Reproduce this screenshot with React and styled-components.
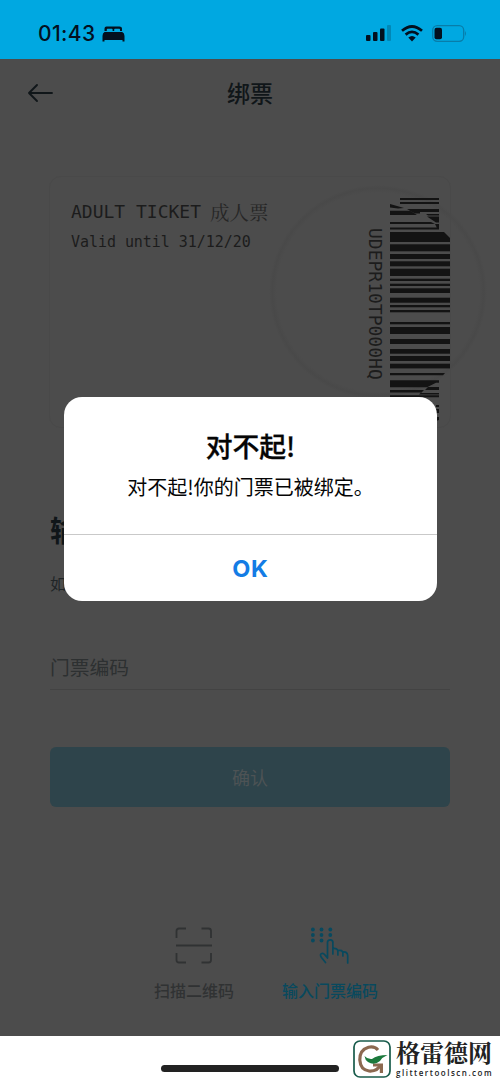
import React from "react";
import styled, { createGlobalStyle } from "styled-components";

const GlobalStyle = createGlobalStyle`
  * {
    box-sizing: border-box;
  }

  body {
    margin: 0;
    background: #fff;
    font-family: "Noto Sans CJK SC", sans-serif;
  }
`;

const Page = styled.div`
  position: relative;
  display: flex;
  flex-direction: column;
  width: 500px;
  height: 1082px;
  overflow: hidden;
`;

const StatusBar = styled.header`
  display: flex;
  justify-content: space-between;
  align-items: center;
  height: 59px;
  padding: 8px 33px 0 38px;
  background: #00a8e1;
  color: #03101f;
`;

const StatusGroup = styled.div`
  display: flex;
  align-items: center;
  gap: ${(props) => props.$gap}px;
`;

const Time = styled.span`
  width: 58px;
  font: 500 21px/24px Inter, sans-serif;
  letter-spacing: 0.4px;
  white-space: nowrap;
`;

const Screen = styled.main`
  display: flex;
  flex-direction: column;
  height: 977px;
  background: radial-gradient(
    ellipse 109px 107px at 378px 233px,
    #4c4c4c 0 93%,
    #494949 97%,
    #4c4c4c 100%
  );
  color: #101619;
`;

const NavBar = styled.nav`
  display: grid;
  grid-template-columns: 54px 1fr 54px;
  align-items: center;
  height: 67px;
  padding: 0 27px;
`;

const NavTitle = styled.h1`
  margin: 0;
  font-size: 23px;
  font-weight: 500;
  line-height: 32px;
  text-align: center;
  transform: translateY(-1px);
`;

const Ticket = styled.section`
  display: flex;
  justify-content: space-between;
  height: 252px;
  margin: 50px 49px 0;
  padding-left: 21px;
  border: 1px solid #494949;
  border-radius: 12px;
  color: #1c1c1c;
`;

const TicketText = styled.div`
  padding-top: 19px;
  font-family: "DejaVu Sans Mono", "Noto Sans CJK SC", monospace;
  white-space: pre;
`;

const TicketName = styled.div`
  display: flex;
  align-items: center;
  gap: 9px;
  height: 31px;
  font-size: 18px;
`;

const TicketKind = styled.span`
  font: 19.5px/30px "Noto Serif CJK SC", "Noto Sans CJK SC", serif;
  color: #262626;
`;

const TicketDate = styled.div`
  font-size: 15px;
  line-height: 30px;
  letter-spacing: -0.05px;
`;

const TicketCode = styled.div`
  display: flex;
  gap: 4px;
  padding-top: 21px;
`;

const CodeText = styled.div`
  width: 22px;
  padding-top: 30px;
  writing-mode: vertical-rl;
  font: 18px/22px "DejaVu Sans Mono", monospace;
`;

const Heading = styled.h2`
  margin: 82px 50px 0;
  font-size: 29px;
  font-weight: 700;
  line-height: 38px;
`;

const Hint = styled.p`
  margin: 23px 50px 0;
  font-size: 16px;
  line-height: 24px;
  color: #202527;
`;

const Field = styled.div`
  height: 46px;
  margin: 49px 50px 0;
  border-bottom: 1px solid #434343;
  font-size: 19.8px;
  line-height: 46px;
  color: #2d3031;
`;

const ConfirmButton = styled.button`
  height: 60px;
  margin: 57px 50px 0;
  padding: 0;
  border: 0;
  border-radius: 6px;
  background: #2e444b;
  color: #4d5355;
  font: 18px/60px "Noto Sans CJK SC", sans-serif;
`;

const Tabs = styled.div`
  display: flex;
  justify-content: center;
  gap: 40px;
  margin-top: 120px;
  padding-left: 32px;
`;

const Tab = styled.div`
  display: flex;
  flex-direction: column;
  align-items: center;
  width: ${(props) => props.$width}px;
  color: ${(props) => (props.$active ? "#08495e" : "#303233")};
`;

const TabLabel = styled.span`
  margin-top: 13px;
  font-size: 16px;
  font-weight: 500;
  line-height: 24px;
  white-space: nowrap;
`;

const Footer = styled.footer`
  display: flex;
  justify-content: space-between;
  height: 46px;
  padding-left: 161px;
  background: #fff;
`;

const HomeIndicator = styled.div`
  width: 178px;
  height: 7px;
  margin-top: 29px;
  border-radius: 4px;
  background: #222;
`;

const Brand = styled.div`
  display: flex;
  gap: 5px;
  width: 149px;
  padding: 4px 0 0 2px;
`;

const BrandText = styled.div`
  display: flex;
  flex-direction: column;
  color: #222;
`;

const BrandName = styled.strong`
  font: 700 24px/24px "Noto Serif CJK SC", "Noto Sans CJK SC", serif;
  white-space: nowrap;
`;

const BrandSite = styled.span`
  margin-top: 4px;
  font: 600 8px/10px "Open Sans", sans-serif;
  letter-spacing: 1.5px;
`;

const Overlay = styled.div`
  position: absolute;
  inset: 59px 0 46px;
  padding: 338px 63px 0 64px;
`;

const Dialog = styled.div`
  display: flex;
  flex-direction: column;
  height: 204px;
  border-radius: 18px;
  background: #fff;
  color: #050505;
  text-align: center;
`;

const DialogBody = styled.div`
  height: 138px;
  padding-top: 30px;
  border-bottom: 1px solid #c9c9c9;
`;

const DialogTitle = styled.h3`
  margin: 0;
  font-size: 26.8px;
  font-weight: 500;
  line-height: 37px;
  -webkit-text-stroke: 0.3px currentColor;
`;

const DialogMessage = styled.p`
  margin: 8px 0 0;
  font-size: 20px;
  line-height: 30px;
`;

const DialogButton = styled.button`
  flex: 1;
  padding: 0;
  border: 0;
  background: none;
  color: #147ce5;
  font: 700 23.5px/65px Inter, sans-serif;
  letter-spacing: 0.8px;
`;

// [top, height] of the full-width bars
const bars = [
  [46.3, 7], [56, 5], [63.3, 5], [70.7, 7.3], [80.7, 2.3], [85.7, 2.3],
  [90.3, 4.7], [99.7, 5], [107, 2.3], [112, 2.3], [124, 2.3], [129, 7],
  [141, 5], [151, 4.7], [158, 5], [165.7, 4.7],
];

function Barcode() {
  return (
    <svg width="60" height="224" fill="#131313">
      <path d="M10 0h39v2H10zM10 4h39v2H10z" />
      <path d="M0 6l14 4-6 .5L0 9.500z" />
      <path d="M0 12.700h20l7 4.300H0zM17 11h32v3H30v1.500h-5z" />
      <path d="M36 16h13v1.500H38zM37 18.500h12v6h-3l-6-4z" />
      <path d="M0 24h41l4 2H0zM0 29.500h49v2H0zM45 26h4v4h-2z" />
      <path d="M0 34h54l6 6v4H0z" />
      {bars.map(([y, height]) => (
        <rect key={y} y={y} width="60" height={height} />
      ))}
      <path d="M0 175h55l-2 2.300H0z" />
      <path d="M0 182.300h49v2.400h-3l-9 4.600H0zM38 189h11v3H35z" />
      <path d="M0 192h34l-3 3h18v1.500H29l2-2H0zM0 197.300h49v2H0z" />
      <path d="M46 207h3v2h-3zM46 211h3v4h-3zM46 219h3v3l-3 1z" />
    </svg>
  );
}

function BedIcon() {
  return (
    <svg width="23" height="16" viewBox="0 0 23 16" fill="currentColor">
      <path d="M2.500 5V2.500Q2.500.5 4.500.5h13q2.500 0 2.500 2V5h-2V3.500q0-.7-.7-.7h-4.400q-.7 0-.7.7V5h-1.600V3.500q0-.7-.7-.7H5.500q-.7 0-.7.7V5z" />
      <path d="M2.500 6h17.700q2.300 1 2.300 4v5.500h-2V14H2.500v1.500h-2V10q0-3 2-4z" />
    </svg>
  );
}

function SignalIcon() {
  return (
    <svg width="26" height="17" viewBox="0 0 26 17" fill="currentColor">
      <rect y="10" width="4.500" height="6" rx="1" />
      <rect x="7" y="7" width="4.500" height="9" rx="1" />
      <rect x="14" y="3.500" width="4.500" height="12.500" rx="1" />
      <rect x="21" width="4" height="16" rx="1" opacity=".22" />
    </svg>
  );
}

function WifiIcon() {
  return (
    <svg width="22" height="17" viewBox="0 0 22 17" fill="none" stroke="currentColor" strokeWidth="2.700">
      <path d="M1 5.800Q11-2.800 21 5.800M4.600 9.600Q11 4.200 17.400 9.600" />
      <path d="M7.300 12.600Q11 9.400 14.700 12.600L11 16.500z" fill="currentColor" stroke="none" />
    </svg>
  );
}

function BatteryIcon() {
  return (
    <svg width="35" height="17" viewBox="0 0 35 17">
      <rect x=".7" y=".7" width="31" height="15.600" rx="4.500" fill="none" stroke="#087da9" strokeWidth="1.300" />
      <rect x="2.500" y="2.800" width="7.500" height="11.500" rx="2" fill="currentColor" />
      <path d="M33 6q2 2.500 0 5z" fill="#087da9" />
    </svg>
  );
}

function BackIcon() {
  return (
    <svg width="27" height="20" viewBox="0 0 27 20" fill="none" stroke="currentColor" strokeWidth="1.900" strokeLinecap="round" strokeLinejoin="round">
      <path d="M25 10H2M10 2L2 10l8 8" />
    </svg>
  );
}

function ScanIcon() {
  return (
    <svg width="38" height="38" viewBox="0 0 38 38" fill="none" stroke="currentColor" strokeWidth="1.800">
      <path d="M1.500 11V4q0-2.500 2.500-2.500h7M26.500 1.500h7Q36 1.500 36 4v7M36 26v7q0 2.500-2.500 2.500h-7M11 35.500H4q-2.500 0-2.500-2.500v-7M1 18.500h36" />
    </svg>
  );
}

function KeypadIcon() {
  return (
    <svg width="38" height="38" viewBox="0 0 38 38" fill="none" stroke="currentColor" strokeWidth="1.700" strokeLinecap="round" strokeLinejoin="round">
      {[2.5, 8, 13.5].map((cy) =>
        [1.9, 10.5, 19.3].map((cx) =>
          cx > 19 && cy > 13 ? null : (
            <circle key={`${cx}-${cy}`} cx={cx} cy={cy} r="1.900" fill="currentColor" stroke="none" />
          )
        )
      )}
      <path d="M14.500 35.500l-4-5q-2.200-3.300.3-4 1.700-.3 3.200 1.500l2.500 3V15.500q0-2.700 2.700-2.700t2.700 2.700V27M21.900 21.500q5-.5 5 3V28M26.900 23.500q4.700-1 5 2.500v3M31.900 25q4.300-.5 4.800 3.500V36" />
    </svg>
  );
}

function BrandLogo() {
  return (
    <svg width="38" height="38" viewBox="0 0 38 38" fill="none">
      <rect x="1" y="1" width="36" height="36" rx="6" stroke="#185b4b" strokeWidth="1.700" />
      <path d="M25 10Q21.500 6 15.500 7.300 6.500 10 6.800 20 7.500 30 16 31q9 .5 11.500-6.500" stroke="#8c6950" strokeWidth="3.200" />
      <path d="M20 23.500h10V33h-3.200v-6.500H20z" fill="#8c6950" />
      <path d="M11.500 16q3 3.500 7.500 3 5-4 15.500-4-5 2-7.500 6-6 5-12 1-3-2-3.500-6z" fill="#1b793c" />
    </svg>
  );
}

function App() {
  return (
    <>
      <GlobalStyle />
      <Page>
        <StatusBar>
          <StatusGroup $gap={6}>
            <Time>01:43</Time>
            <BedIcon />
          </StatusGroup>
          <StatusGroup $gap={9}>
            <SignalIcon />
            <WifiIcon />
            <BatteryIcon />
          </StatusGroup>
        </StatusBar>

        <Screen>
          <NavBar>
            <BackIcon />
            <NavTitle>绑票</NavTitle>
          </NavBar>

          <Ticket>
            <TicketText>
              <TicketName>
                ADULT TICKET
                <TicketKind>成人票</TicketKind>
              </TicketName>
              <TicketDate>Valid until 31/12/20</TicketDate>
            </TicketText>
            <TicketCode>
              <CodeText>UDEPR10TP000HQ</CodeText>
              <Barcode />
            </TicketCode>
          </Ticket>

          <Heading>输</Heading>
          <Hint>如</Hint>
          <Field>门票编码</Field>
          <ConfirmButton>确认</ConfirmButton>

          <Tabs>
            <Tab $width={88}>
              <ScanIcon />
              <TabLabel>扫描二维码</TabLabel>
            </Tab>
            <Tab $width={104} $active>
              <KeypadIcon />
              <TabLabel>输入门票编码</TabLabel>
            </Tab>
          </Tabs>
        </Screen>

        <Footer>
          <HomeIndicator />
          <Brand>
            <BrandLogo />
            <BrandText>
              <BrandName>格雷德网</BrandName>
              <BrandSite>glittertoolscn.com</BrandSite>
            </BrandText>
          </Brand>
        </Footer>

        <Overlay>
          <Dialog>
            <DialogBody>
              <DialogTitle>对不起!</DialogTitle>
              <DialogMessage>对不起!你的门票已被绑定。</DialogMessage>
            </DialogBody>
            <DialogButton>OK</DialogButton>
          </Dialog>
        </Overlay>
      </Page>
    </>
  );
}

export default App;
